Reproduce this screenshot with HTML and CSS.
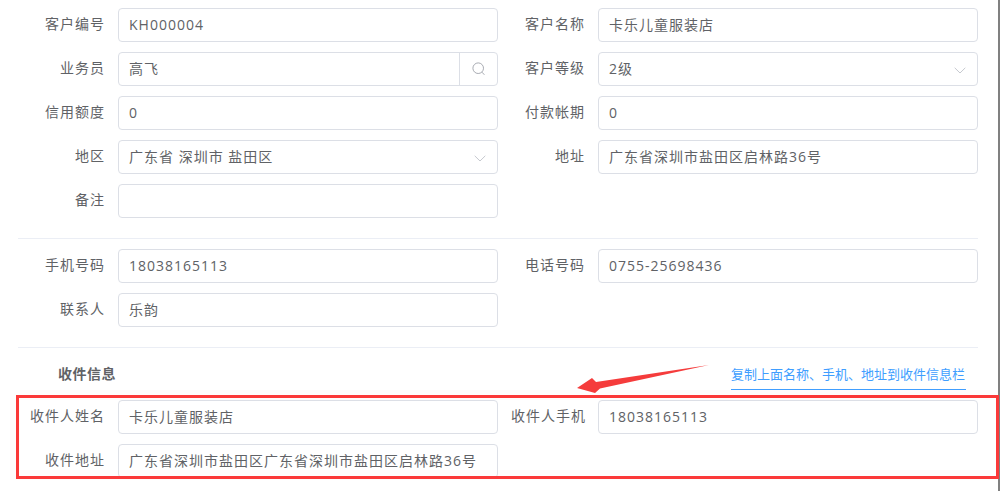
FILE: index.html
```html
<!DOCTYPE html>
<html lang="zh">
<head>
<meta charset="utf-8">
<title>客户信息</title>
<link rel="stylesheet" href="styles.css">
</head>
<body>
<main class="form">
  <section class="grid">
    <div class="label">客户编号</div><div class="field">KH000004</div>
    <div class="label">客户名称</div><div class="field">卡乐儿童服装店</div>
    <div class="label">业务员</div>
    <div class="field has-addon">高飞<span class="addon"><svg class="search" width="14" height="14" viewBox="0 0 14 14"><circle cx="6.200" cy="6.200" r="5.300"/><path d="M10 10.200l2.400 2.600"/></svg></span></div>
    <div class="label">客户等级</div>
    <div class="field select">2级<svg class="chev" width="12" height="7" viewBox="0 0 12 7"><path d="M.7.8L6 6l5.300-5.200"/></svg></div>
    <div class="label">信用额度</div><div class="field">0</div>
    <div class="label">付款帐期</div><div class="field">0</div>
    <div class="label">地区</div>
    <div class="field select">广东省 深圳市 盐田区<svg class="chev" width="12" height="7" viewBox="0 0 12 7"><path d="M.7.8L6 6l5.300-5.200"/></svg></div>
    <div class="label">地址</div><div class="field">广东省深圳市盐田区启林路36号</div>
    <div class="label">备注</div><div class="field"></div>
  </section>
  <hr class="rule rule-a">
  <section class="grid">
    <div class="label">手机号码</div><div class="field">18038165113</div>
    <div class="label">电话号码</div><div class="field">0755-25698436</div>
    <div class="label">联系人</div><div class="field">乐韵</div>
  </section>
  <hr class="rule rule-b">
  <div class="section-head">
    <strong class="section-title">收件信息</strong>
    <a class="copy-link">复制上面名称、手机、地址到收件信息栏</a>
  </div>
  <section class="grid">
    <div class="label">收件人姓名</div><div class="field">卡乐儿童服装店</div>
    <div class="label">收件人手机</div><div class="field">18038165113</div>
    <div class="label">收件地址</div><div class="field">广东省深圳市盐田区广东省深圳市盐田区启林路36号</div>
  </section>
</main>
<svg class="arrow" width="140" height="36" viewBox="0 0 140 36"><path d="M133 1L20 18L16 14L1 24L19 29L24 24.500Z"/></svg>
<div class="edge"></div>
<div class="highlight"></div>
</body>
</html>
```
FILE: styles.css
```css
* { box-sizing: border-box; }
html, body { margin: 0; height: 491px; overflow: hidden; background: #fff; }
body {
  position: relative;
  font-family: "Open Sans", "Noto Sans CJK SC", sans-serif;
  font-size: 14px;
  color: #606266;
}
.form { padding: 8px 22px 0 18px; }
.grid {
  display: grid;
  grid-template-columns: 87px 380px 74px 380px;
  column-gap: 13px;
  row-gap: 10px;
}
.label {
  height: 34px;
  line-height: 31px;
  text-align: right;
  letter-spacing: 1px;
  white-space: nowrap;
}
.field {
  position: relative;
  height: 34px;
  line-height: 31px;
  padding: 0 10px;
  border: 1px solid #dcdfe6;
  border-radius: 4px;
  letter-spacing: 1px;
  white-space: nowrap;
  overflow: hidden;
}
.addon {
  position: absolute;
  top: 0;
  right: 0;
  bottom: 0;
  width: 38px;
  display: flex;
  align-items: center;
  justify-content: center;
  border-left: 1px solid #dcdfe6;
}
.search { fill: none; stroke: #a8abb2; stroke-width: 1; }
.chev {
  position: absolute;
  top: 14px;
  right: 11px;
  fill: none;
  stroke: #c6c9cf;
  stroke-width: 1;
}
.rule { margin: 0; border: 0; height: 1px; background: #ebeef5; width: 960px; }
.rule-a { margin-top: 20px; margin-bottom: 10px; }
.rule-b { margin-top: 20px; }
.section-head {
  height: 52px;
  display: flex;
  justify-content: space-between;
  align-items: flex-start;
}
.section-title {
  margin: 16px 0 0 40px;
  font-size: 14px;
  line-height: 20px;
  letter-spacing: .5px;
  font-weight: 700;
  color: #606266;
}
.copy-link {
  margin: 16px 12px 0 0;
  height: 26px;
  width: 235px;
  padding-bottom: 5px;
  font-size: 13px;
  line-height: 20px;
  color: #409eff;
  border-bottom: 1px solid #409eff;
}
.arrow { position: absolute; left: 576px; top: 364px; }
.arrow path { fill: #f53c3c; }
.highlight {
  position: absolute;
  left: 16px;
  top: 395px;
  width: 983px;
  height: 84px;
  border: 3px solid #fb3a3a;
}
.edge {
  position: absolute;
  right: 0;
  top: 0;
  bottom: 0;
  width: 2px;
  background: #808080;
}
```
